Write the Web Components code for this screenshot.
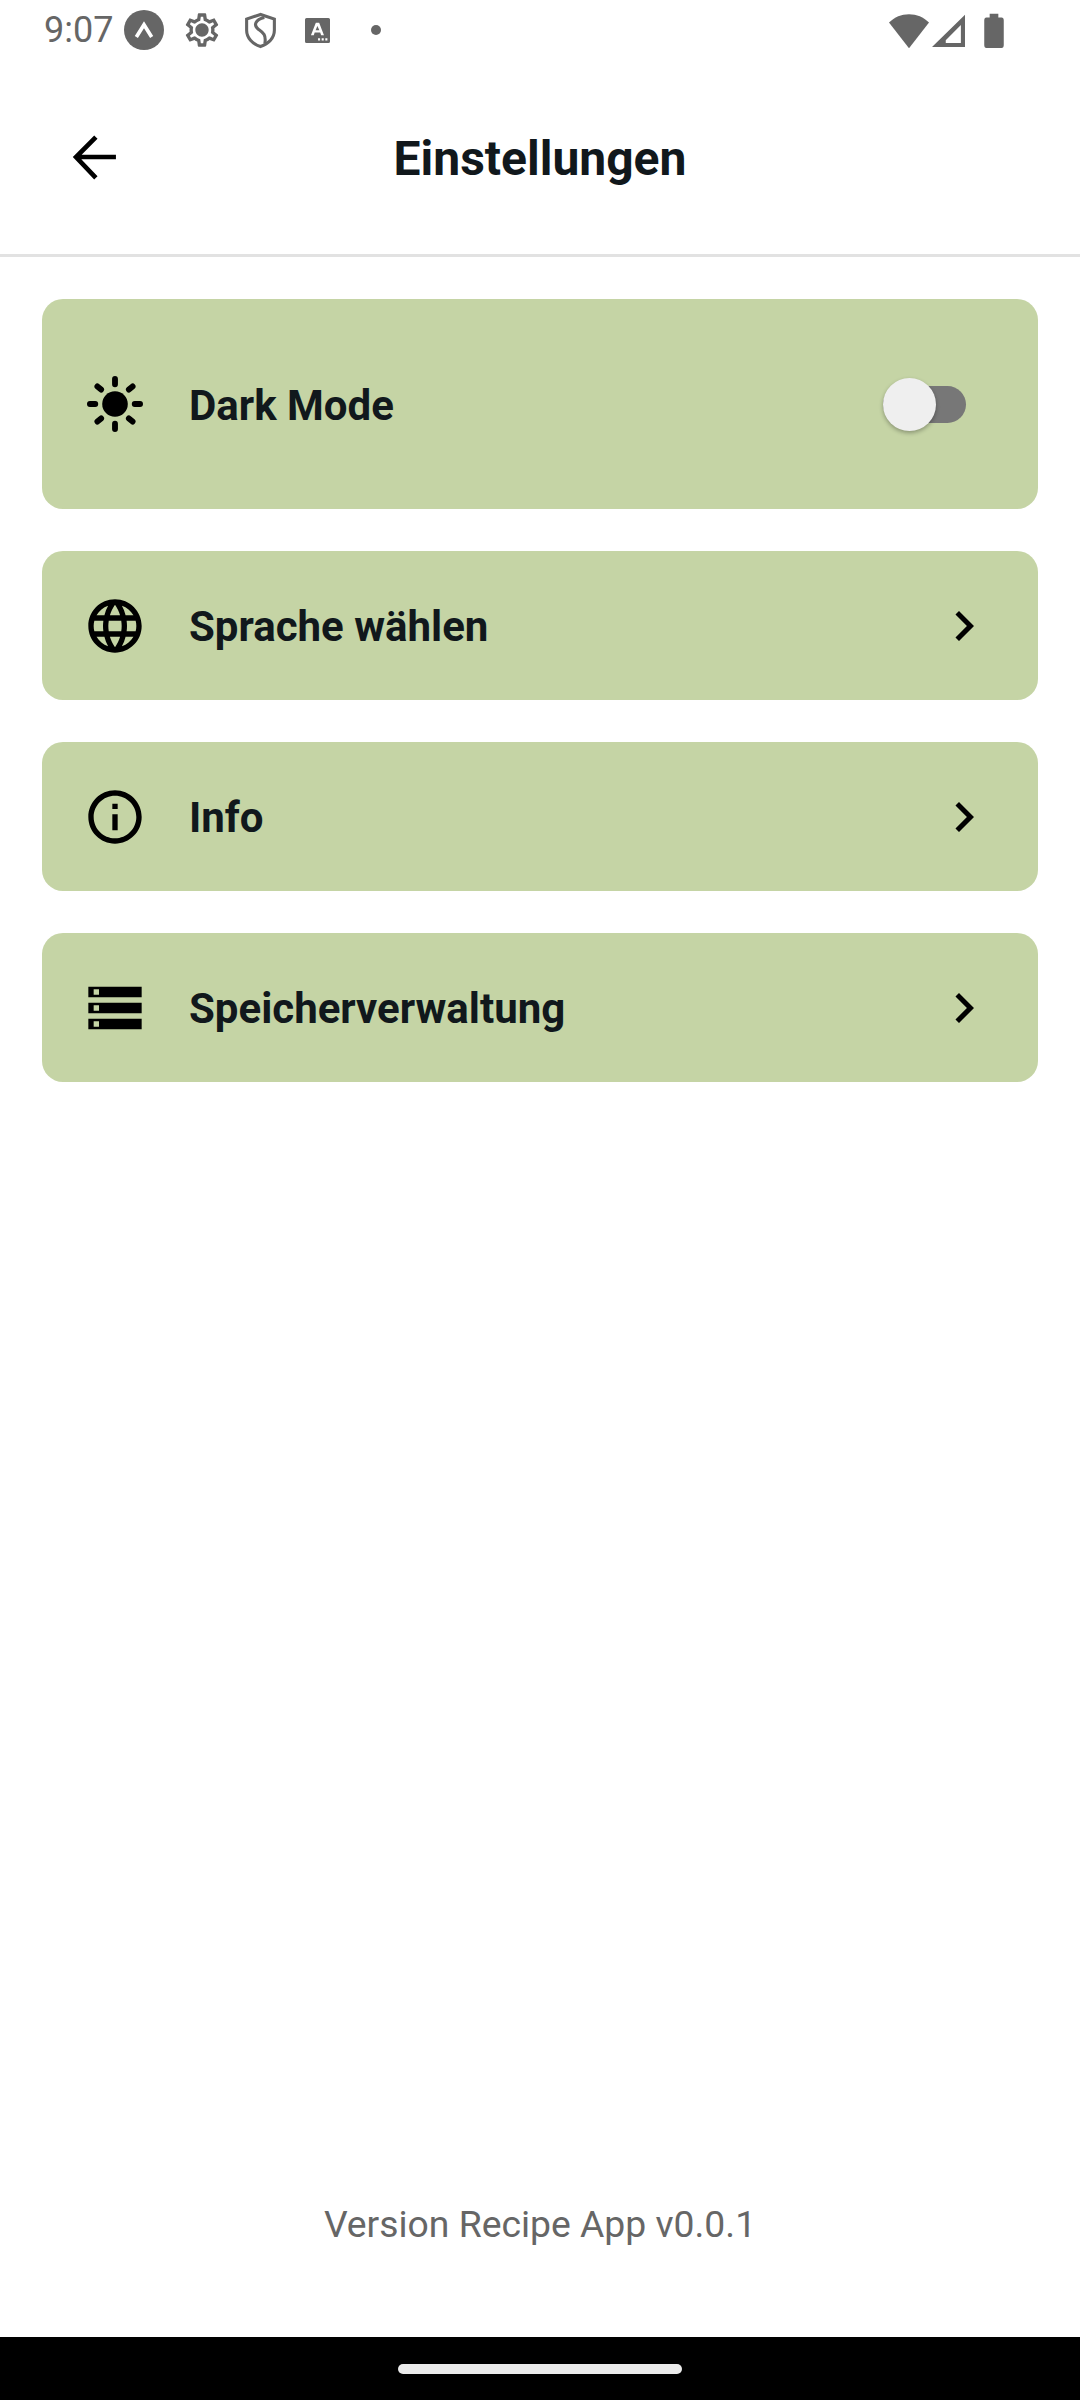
<!DOCTYPE html>
<html lang="de">
<head>
<meta charset="utf-8">
<title>Einstellungen</title>
<style>
  html, body { margin: 0; padding: 0; background: #fff; }
  body { width: 1080px; height: 2400px; font-family: Roboto, "Liberation Sans", sans-serif; }
  settings-page { height: 100%; }
</style>
</head>
<body>
<settings-page>
  <status-bar slot="status"></status-bar>
  <app-header slot="header" title="Einstellungen"></app-header>

  <settings-row tall>
    <app-icon slot="icon" name="sun"></app-icon>
    Dark Mode
    <toggle-switch slot="trailing"></toggle-switch>
  </settings-row>
  <settings-row>
    <app-icon slot="icon" name="language"></app-icon>
    Sprache wählen
    <app-icon slot="trailing" name="chevron" size="60"></app-icon>
  </settings-row>
  <settings-row>
    <app-icon slot="icon" name="info"></app-icon>
    Info
    <app-icon slot="trailing" name="chevron" size="60"></app-icon>
  </settings-row>
  <settings-row>
    <app-icon slot="icon" name="storage"></app-icon>
    Speicherverwaltung
    <app-icon slot="trailing" name="chevron" size="60"></app-icon>
  </settings-row>

  <span slot="footer">Version Recipe App v0.0.1</span>
  <nav-bar slot="nav"></nav-bar>
</settings-page>

<script>
// Icon paths, all on a 24 unit grid
const ICONS = {
  sun: '<circle cx="12" cy="12" r="4.8"/><path fill="none" stroke="currentColor" stroke-width="2.2" stroke-linecap="round" d="M12 2.6v2M12 19.400v2M2.600 12h2M19.400 12h2M5.400 5.400l1.400 1.200M17.200 17.400l1.400 1.200M5.400 18.600l1.400-1.200M17.200 6.600l1.400-1.200"/>',
  language: '<path d="M11.99 2C6.47 2 2 6.48 2 12s4.47 10 9.99 10C17.52 22 22 17.52 22 12S17.52 2 11.99 2zm6.93 6h-2.95c-.32-1.25-.78-2.45-1.38-3.56 1.84.63 3.37 1.91 4.33 3.56zM12 4.04c.83 1.2 1.48 2.53 1.91 3.96h-3.82c.43-1.43 1.08-2.76 1.91-3.96zM4.26 14C4.1 13.36 4 12.69 4 12s.1-1.36.26-2h3.38c-.08.66-.14 1.32-.14 2 0 .68.06 1.34.14 2H4.26zm.82 2h2.95c.32 1.25.78 2.45 1.38 3.56-1.84-.63-3.37-1.9-4.33-3.56zm2.95-8H5.08c.96-1.66 2.49-2.93 4.33-3.56C8.81 5.55 8.35 6.75 8.03 8zM12 19.96c-.83-1.2-1.48-2.53-1.91-3.96h3.82c-.43 1.43-1.08 2.76-1.91 3.96zM14.34 14H9.66c-.09-.66-.16-1.32-.16-2 0-.68.07-1.35.16-2h4.68c.09.65.16 1.32.16 2 0 .68-.07 1.34-.16 2zm.25 5.56c.6-1.11 1.06-2.31 1.38-3.56h2.95c-.96 1.65-2.49 2.93-4.33 3.56zM16.36 14c.08-.66.14-1.32.14-2 0-.68-.06-1.34-.14-2h3.38c.16.64.26 1.31.26 2s-.1 1.36-.26 2h-3.38z"/>',
  info: '<path d="M11 7h2v2h-2zm0 4h2v6h-2zm1-9C6.48 2 2 6.48 2 12s4.48 10 10 10 10-4.48 10-10S17.52 2 12 2zm0 18c-4.41 0-8-3.59-8-8s3.59-8 8-8 8 3.59 8 8-3.59 8-8 8z"/>',
  storage: '<path d="M2 20h20v-4H2v4zm2-3h2v2H4v-2zM2 4v4h20V4H2zm4 3H4V5h2v2zm-4 7h20v-4H2v4zm2-3h2v2H4v-2z"/>',
  chevron: '<path d="M10 6L8.59 7.41 13.17 12l-4.58 4.59L10 18l6-6z"/>',
  back: '<path fill="none" stroke="currentColor" stroke-width="2" d="M12.800 3.500L4.300 12l8.500 8.900M4.300 12h17.100"/>',
  gear: '<path d="M19.43 12.98c.04-.32.07-.64.07-.98 0-.34-.03-.66-.07-.98l2.11-1.65c.19-.15.24-.42.12-.64l-2-3.46c-.09-.16-.26-.25-.44-.25-.06 0-.12.01-.17.03l-2.49 1c-.52-.4-1.08-.73-1.69-.98l-.38-2.65C14.46 2.18 14.25 2 14 2h-4c-.25 0-.46.18-.49.42l-.38 2.65c-.61.25-1.17.59-1.69.98l-2.49-1c-.06-.02-.12-.03-.18-.03-.17 0-.34.09-.43.25l-2 3.46c-.13.22-.07.49.12.64l2.11 1.65c-.04.32-.07.65-.07.98 0 .33.03.66.07.98l-2.11 1.65c-.19.15-.24.42-.12.64l2 3.46c.09.16.26.25.44.25.06 0 .12-.01.17-.03l2.49-1c.52.4 1.08.73 1.69.98l.38 2.65c.03.24.24.42.49.42h4c.25 0 .46-.18.49-.42l.38-2.65c.61-.25 1.17-.59 1.69-.98l2.49 1c.06.02.12.03.18.03.17 0 .34-.09.43-.25l2-3.46c.12-.22.07-.49-.12-.64l-2.11-1.65zm-1.98-1.71c.04.31.05.52.05.73 0 .21-.02.43-.05.73l-.14 1.13.89.7 1.08.84-.7 1.21-1.27-.51-1.04-.42-.9.68c-.43.32-.84.56-1.25.73l-1.06.43-.16 1.13-.2 1.35h-1.4l-.19-1.35-.16-1.13-1.06-.43c-.43-.18-.83-.41-1.23-.71l-.91-.7-1.06.43-1.27.51-.7-1.21 1.08-.84.89-.7-.14-1.13c-.03-.31-.05-.54-.05-.74s.02-.43.05-.73l.14-1.13-.89-.7-1.08-.84.7-1.21 1.27.51 1.04.42.9-.68c.43-.32.84-.56 1.25-.73l1.06-.43.16-1.13.2-1.35h1.39l.19 1.35.16 1.13 1.06.43c.43.18.83.41 1.23.71l.91.7 1.06-.43 1.27-.51.7 1.21-1.07.85-.89.7.14 1.13zM12 8c-2.21 0-4 1.79-4 4s1.79 4 4 4 4-1.79 4-4-1.79-4-4-4z"/>',
  expo: '<circle cx="12" cy="12" r="12"/><path d="M7.400 16.200L12 8.800l4.600 7.400" fill="none" stroke="#fff" stroke-width="2.200"/>',
  shield: '<path d="M12 1.600L3 4.600v7.200c0 4.800 3.700 9 9 10.600 5.300-1.600 9-5.800 9-10.600V4.600z" fill="none" stroke="currentColor" stroke-width="2"/><path d="M14.500 3.600C8.500 5 7.400 8.600 10.400 11c2.600 2 5.600 3.200 4.400 9.600" fill="none" stroke="currentColor" stroke-width="2"/>',
  font: '<path fill-rule="evenodd" d="M1.500 0h21A1.500 1.500 0 0 1 24 1.500v21a1.500 1.500 0 0 1-1.500 1.500h-21A1.500 1.500 0 0 1 0 22.500v-21A1.500 1.500 0 0 1 1.500 0zM10.400 4.500L5.700 16.500h2.700l.9-2.600h5.300l.9 2.600h2.700L13.600 4.500zM11.900 7.700l1.900 4h-3.600zM12.500 19.500v2h2v-2zM16 19.500v2h2v-2zM19.500 19.500v2h2v-2z"/>',
  wifi: '<path d="M12 23L0 7.500C3.300 4.200 7.400 2.500 12 2.500s8.700 1.700 12 5z"/>',
  signal: '<path fill-rule="evenodd" d="M24 .500V24H0zM21 8L10 19v2H21z"/>',
  battery: '<path d="M8 .5h8v2.500h3a2 2 0 0 1 2 2V22a2 2 0 0 1-2 2H5a2 2 0 0 1-2-2V5a2 2 0 0 1 2-2h3z"/>'
};

// <app-icon name="info" size="64">
class AppIcon extends HTMLElement {
  constructor() {
    super();
    this.attachShadow({ mode: 'open' });
  }

  connectedCallback() {
    const size = this.getAttribute('size') || 64;
    this.shadowRoot.innerHTML = `
      <style>
        :host { display: block; flex: none; width: ${size}px; height: ${size}px; line-height: 0; color: inherit; }
        svg { width: 100%; height: 100%; fill: currentColor; display: block; }
      </style>
      <svg viewBox="0 0 24 24" preserveAspectRatio="none">${ICONS[this.getAttribute('name')] || ''}</svg>
    `;
  }
}
customElements.define('app-icon', AppIcon);

// Android status bar
class StatusBar extends HTMLElement {
  constructor() {
    super();
    this.attachShadow({ mode: 'open' });
    this.shadowRoot.innerHTML = `
      <style>
        :host {
          display: flex;
          align-items: center;
          height: 60px;
          padding: 0 73px 0 44px;
          color: #666;
          font: 400 36px Roboto, sans-serif;
          box-sizing: border-box;
        }
        .time { width: 80px; }
        .dot { width: 10px; height: 10px; border-radius: 50%; background: #666; }
        .spacer { flex: 1; }
      </style>
      <span class="time">9:07</span>
      <app-icon name="expo" size="40"></app-icon>
      <app-icon name="gear" size="40" style="margin-left:18px"></app-icon>
      <app-icon name="shield" size="37" style="margin-left:20px"></app-icon>
      <app-icon name="font" size="25" style="margin-left:26px"></app-icon>
      <span class="dot" style="margin-left:41px"></span>
      <span class="spacer"></span>
      <app-icon name="wifi" size="40"></app-icon>
      <app-icon name="signal" size="33" style="margin-left:3px"></app-icon>
      <app-icon name="battery" size="26" style="margin-left:16px;height:35px"></app-icon>
    `;
  }
}
customElements.define('status-bar', StatusBar);

// Top bar with back arrow and centered title
class AppHeader extends HTMLElement {
  constructor() {
    super();
    this.attachShadow({ mode: 'open' });
    this.shadowRoot.innerHTML = `
      <style>
        :host {
          display: grid;
          grid-template-columns: 1fr auto 1fr;
          align-items: center;
          height: 194px;
          border-bottom: 3px solid #e2e2e2;
          color: #000;
        }
        .back { padding-left: 66px; }
        h1 {
          margin: 0;
          padding-top: 3px;
          font: 700 48px Roboto, sans-serif;
          color: #11181c;
        }
      </style>
      <div class="back"><app-icon name="back" size="56"></app-icon></div>
      <h1></h1>
      <div></div>
    `;
  }

  connectedCallback() {
    this.shadowRoot.querySelector('h1').textContent = this.getAttribute('title');
  }
}
customElements.define('app-header', AppHeader);

// One green settings card
class SettingsRow extends HTMLElement {
  constructor() {
    super();
    this.attachShadow({ mode: 'open' });
    this.shadowRoot.innerHTML = `
      <style>
        :host {
          display: flex;
          align-items: center;
          box-sizing: border-box;
          height: 149px;
          padding: 0 44px 0 41px;
          background: #c5d4a5;
          border-radius: 21px;
          color: #000;
        }
        :host([tall]) { height: 210px; }
        .label {
          flex: 1;
          margin-left: 42px;
          padding-top: 2px;
          font: 700 42px Roboto, sans-serif;
          color: #11181c;
        }
      </style>
      <slot name="icon"></slot>
      <div class="label"><slot></slot></div>
      <slot name="trailing"></slot>
    `;
  }
}
customElements.define('settings-row', SettingsRow);

// Switch in its off state
class ToggleSwitch extends HTMLElement {
  constructor() {
    super();
    this.attachShadow({ mode: 'open' });
    this.shadowRoot.innerHTML = `
      <style>
        :host {
          display: flex;
          align-items: center;
          position: relative;
          width: 83px;
          height: 53px;
          margin-right: 28px;
          margin-top: 1px;
        }
        .track { width: 100%; height: 37px; border-radius: 19px; background: #777; }
        .thumb {
          position: absolute;
          left: 0;
          top: 0;
          width: 53px;
          height: 53px;
          border-radius: 50%;
          background: #efefef;
          box-shadow: 0 2px 4px rgba(0, 0, 0, .3);
        }
      </style>
      <div class="track"></div>
      <div class="thumb"></div>
    `;
  }
}
customElements.define('toggle-switch', ToggleSwitch);

// Gesture bar at the bottom
class NavBar extends HTMLElement {
  constructor() {
    super();
    this.attachShadow({ mode: 'open' });
    this.shadowRoot.innerHTML = `
      <style>
        :host {
          display: flex;
          justify-content: center;
          align-items: center;
          height: 63px;
          background: #000;
        }
        .pill { width: 284px; height: 10px; border-radius: 5px; background: #ebebeb; }
      </style>
      <div class="pill"></div>
    `;
  }
}
customElements.define('nav-bar', NavBar);

// Whole screen
class SettingsPage extends HTMLElement {
  constructor() {
    super();
    this.attachShadow({ mode: 'open' });
    this.shadowRoot.innerHTML = `
      <style>
        :host { display: flex; flex-direction: column; background: #fff; }
        main {
          flex: 1;
          display: flex;
          flex-direction: column;
          gap: 42px;
          padding: 42px 42px 0;
        }
        footer {
          padding-bottom: 88px;
          text-align: center;
          color: #666;
          font: 400 37.3px/50px Roboto, sans-serif;
        }
      </style>
      <slot name="status"></slot>
      <slot name="header"></slot>
      <main><slot></slot></main>
      <footer><slot name="footer"></slot></footer>
      <slot name="nav"></slot>
    `;
  }
}
customElements.define('settings-page', SettingsPage);
</script>
</body>
</html>
